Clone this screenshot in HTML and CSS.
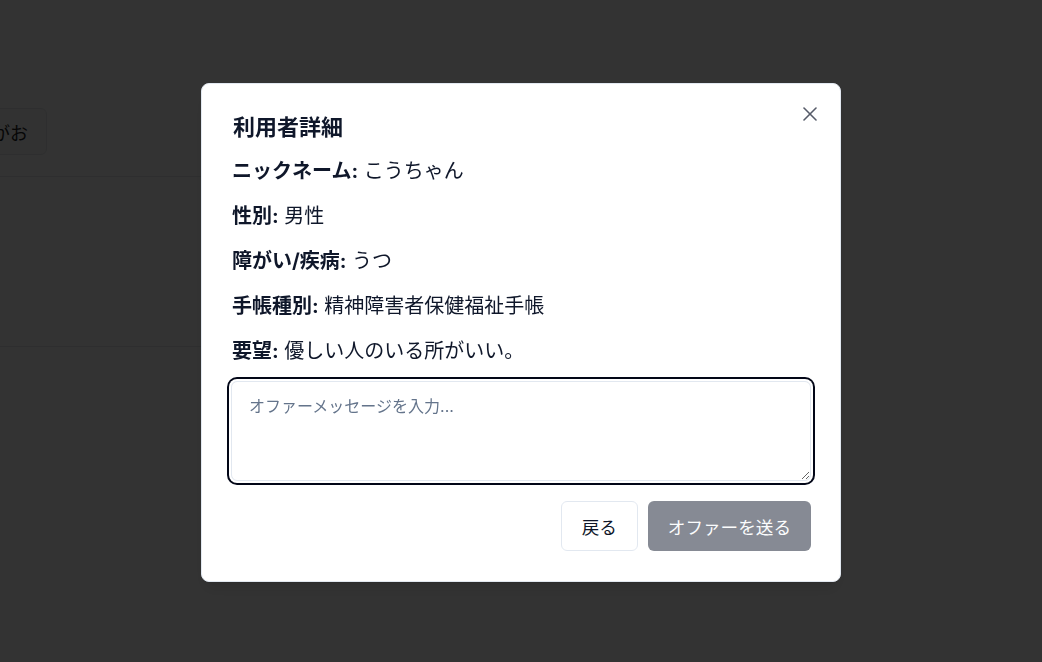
FILE: index.html
```html
<!DOCTYPE html>
<html lang="ja">
<head>
  <meta charset="UTF-8">
  <title>利用者一覧</title>
  <link rel="stylesheet" href="styles.css">
</head>
<body>

  <!-- 背景のページ -->
  <div class="page">
    <div class="toolbar">
      <div class="chip-clip">
        <span class="chip">ご要望がお</span>
      </div>
    </div>
    <div class="list-row"></div>
  </div>

  <!-- モーダル -->
  <div class="overlay">
    <div class="dialog" role="dialog">
      <button class="close-btn" aria-label="閉じる">
        <svg width="24" height="24" viewBox="0 0 24 24" fill="none" stroke="currentColor" stroke-width="1.6" stroke-linecap="round" stroke-linejoin="round">
          <path d="M18 6 6 18"/>
          <path d="m6 6 12 12"/>
        </svg>
      </button>

      <h2 class="dialog-title">利用者詳細</h2>

      <div class="detail-list">
        <p><strong>ニックネーム:</strong> こうちゃん</p>
        <p><strong>性別:</strong> 男性</p>
        <p><strong>障がい/疾病:</strong> うつ</p>
        <p><strong>手帳種別:</strong> 精神障害者保健福祉手帳</p>
        <p><strong>要望:</strong> 優しい人のいる所がいい。</p>
      </div>

      <textarea class="offer-input" placeholder="オファーメッセージを入力..." autofocus></textarea>

      <div class="dialog-footer">
        <button class="btn btn-outline">戻る</button>
        <button class="btn btn-primary" disabled>オファーを送る</button>
      </div>
    </div>
  </div>

</body>
</html>
```

FILE: styles.css
```css
body {
  font-family: "Inter", "Noto Sans CJK JP", sans-serif;
  background-color: #fff;
  color: #0f172a;
  margin: 0;
}
/* 背景ページ */
.page {
  width: 620px;
}
.toolbar {
  height: 177px;
  border-bottom: 1px solid #e5e7eb;
  padding-top: 108px;
  box-sizing: border-box;
}
.chip-clip {
  width: 47px;
  height: 47px;
  overflow: hidden;
  display: flex;
  justify-content: flex-end;
}
.chip {
  display: flex;
  align-items: center;
  height: 47px;
  padding: 0 18px;
  border: 1px solid #e5e7eb;
  border-radius: 6px;
  background: #f8f8f8;
  font-size: 18px;
  color: #222;
  white-space: nowrap;
  box-sizing: border-box;
}
.list-row {
  height: 169px;
  border-bottom: 1px solid #e5e7eb;
}
/* オーバーレイ */
.overlay {
  position: fixed;
  inset: 0;
  background-color: rgba(0,0,0,0.8);
  display: flex;
  justify-content: center;
  align-items: flex-start;
  padding-top: 83px;
}
.dialog {
  position: relative;
  width: 640px;
  box-sizing: border-box;
  background: #fff;
  border: 1px solid #e2e8f0;
  border-radius: 8px;
  padding: 31px 29px 30px;
  box-shadow: 0 10px 15px -3px rgba(0,0,0,0.1), 0 4px 6px -4px rgba(0,0,0,0.1);
  display: flex;
  flex-direction: column;
}
.close-btn {
  position: absolute;
  top: 18px;
  right: 18px;
  border: none;
  background: none;
  padding: 0;
  width: 24px;
  height: 24px;
  color: #0f172a;
  opacity: 0.7;
  cursor: pointer;
}
.close-btn svg {
  display: block;
}
.dialog-title {
  margin: 0;
  padding-left: 2px;
  font-size: 22px;
  line-height: 24px;
  font-weight: 700;
}
.detail-list {
  display: flex;
  flex-direction: column;
  gap: 17px;
  margin-top: 18px;
  padding-left: 1px;
}
.detail-list p {
  margin: 0;
  font-size: 20px;
  line-height: 28px;
}
.detail-list strong {
  font-weight: 700;
}
/* メッセージ入力 */
.offer-input {
  margin-top: 16px;
  height: 100px;
  box-sizing: border-box;
  border: 1px solid #e2e8f0;
  border-radius: 6px;
  padding: 12px 17px;
  font-family: inherit;
  font-size: 16px;
  line-height: 24px;
  color: #0f172a;
  outline: none;
  box-shadow: 0 0 0 2px #fff, 0 0 0 4px #020617;
}
.offer-input::placeholder {
  color: #64748b;
}
/* フッターボタン */
.dialog-footer {
  display: flex;
  justify-content: flex-end;
  gap: 10px;
  margin-top: 20px;
}
.btn {
  height: 50px;
  padding: 0 20px;
  border-radius: 6px;
  font-family: inherit;
  font-size: 17.6px;
  font-weight: 400;
  cursor: pointer;
}
.btn-outline {
  background: #fff;
  border: 1px solid #e2e8f0;
  color: #0f172a;
}
.btn-primary {
  background: #0f172a;
  border: none;
  color: #f8fafc;
}
.btn-primary:disabled {
  opacity: 0.5;
  cursor: default;
}
```
